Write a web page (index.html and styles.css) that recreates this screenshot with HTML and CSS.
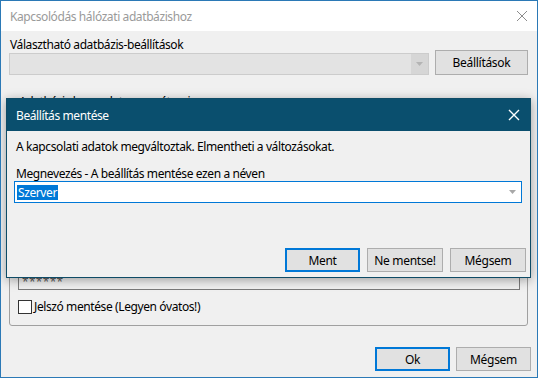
FILE: index.html
```html
<!DOCTYPE html>
<html lang="hu">
<head>
<meta charset="utf-8">
<title>Kapcsolódás hálózati adatbázishoz</title>
<link rel="stylesheet" href="styles.css">
</head>
<body>
<div class="window">
  <div class="titlebar">
    <span class="title">Kapcsolódás hálózati adatbázishoz</span>
    <svg class="close" width="12" height="12" viewBox="0 0 12 12"><path d="M1 1L11 11M11 1L1 11" stroke="#8c8c8c" stroke-width="1" fill="none"/></svg>
  </div>
  <div class="content">
    <div class="top-row">
      <div class="top-left">
        <div class="label">Választható adatbázis-beállítások</div>
        <div class="combo disabled">
          <span class="combo-text"></span>
          <span class="combo-arrow"><svg width="7" height="4" viewBox="0 0 7 4"><path d="M0 0H7L3.5 4Z" fill="#b4b4b4"/></svg></span>
        </div>
      </div>
      <button class="btn btn-settings">Beállítások</button>
    </div>
    <div class="group">
      <span class="legend">Adatbázis kapcsolat paraméterei</span>
      <div class="textbox"><span class="pw">******</span></div>
      <label class="check-row"><span class="checkbox"></span><span>Jelszó mentése (Legyen óvatos!)</span></label>
    </div>
    <div class="bottom-row">
      <button class="btn btn-default">Ok</button>
      <button class="btn">Mégsem</button>
    </div>
  </div>

  <div class="dialog">
    <div class="dlg-title">
      <span>Beállítás mentése</span>
      <svg class="dlg-close" width="12" height="12" viewBox="0 0 12 12"><path d="M1 1L11 11M11 1L1 11" stroke="#ffffff" stroke-width="1.4" fill="none"/></svg>
    </div>
    <div class="dlg-body">
      <div class="msg">A kapcsolati adatok megváltoztak. Elmentheti a változásokat.</div>
      <div class="label2">Megnevezés - A beállítás mentése ezen a néven</div>
      <div class="combo focused">
        <span class="combo-text"><span class="sel">Szerver</span></span>
        <span class="combo-arrow plain"><svg width="7" height="4" viewBox="0 0 7 4"><path d="M0 0H7L3.5 4Z" fill="#a8a8a8"/></svg></span>
      </div>
      <div class="dlg-buttons">
        <button class="btn btn-default w75">Ment</button>
        <button class="btn w76">Ne mentse!</button>
        <button class="btn w76">Mégsem</button>
      </div>
    </div>
  </div>
</div>
</body>
</html>
```

FILE: styles.css
```css
* { box-sizing: border-box; }
html, body { margin: 0; padding: 0; }
body {
  font-family: "Noto Sans", "Open Sans", sans-serif;
  font-size: 12px;
  letter-spacing: -0.4px;
  color: #000;
  background: #fff;
}
.window {
  position: relative;
  width: 538px;
  height: 378px;
  border: 1px solid #2b79b6;
  background: #f0f0f0;
  display: flex;
  flex-direction: column;
  overflow: hidden;
}
.titlebar {
  height: 30px;
  background: #fff;
  display: flex;
  align-items: center;
  justify-content: space-between;
  padding: 0 9px 0 9px;
  flex: none;
}
.title { color: #9a9a9a; }
.content {
  flex: 1;
  display: flex;
  flex-direction: column;
  padding: 6px 9px 6px 8px;
}
.top-row {
  display: flex;
  align-items: flex-end;
  gap: 6px;
  height: 38px;
}
.top-left { width: 420px; display: flex; flex-direction: column; }
.label { line-height: 15px; height: 15px; padding-left: 1px; margin-bottom: 1px; }
.combo {
  height: 22px;
  display: flex;
  align-items: stretch;
  border: 1px solid #ccc;
}
.combo.disabled { background: #e3e3e3; border-color: #cccccc; }
.combo-text { flex: 1; display: flex; align-items: center; padding-left: 2px; }
.combo-arrow {
  width: 17px;
  display: flex;
  align-items: center;
  justify-content: center;
  background: #d6d6d6;
}
.combo-arrow.plain { background: transparent; }
.combo.focused { background: #fff; border-color: #0078d7; }
.sel { background: #0078d7; color: #fff; line-height: 15px; padding: 0 1px; }

.btn {
  font-family: inherit;
  font-size: 12px;
  letter-spacing: -0.3px;
  height: 24px;
  background: #e1e1e1;
  border: 1px solid #adadad;
  color: #000;
  padding: 0;
  margin: 0;
}
.btn-default { border: 2px solid #0078d7; }
.btn-settings { width: 93px; height: 25px; }

.group {
  position: relative;
  margin-top: 27px;
  height: 224px;
  border: 1px solid #a0a0a0;
  border-radius: 3px;
  display: flex;
  flex-direction: column;
  justify-content: flex-end;
  padding: 0 7px 11px 8px;
}
.legend {
  position: absolute;
  top: -9px;
  left: 7px;
  padding: 0 2px;
  line-height: 15px;
  background: #f0f0f0;
}
.textbox {
  height: 22px;
  border: 1px solid #7a7a7a;
  background: #f0f0f0;
  padding-left: 3px;
  display: flex;
  align-items: flex-end;
}
.pw { color: #555; line-height: 15px; letter-spacing: 0.3px; }
.check-row {
  margin-top: 9px;
  display: flex;
  align-items: center;
  gap: 2px;
  line-height: 15px;
}
.checkbox {
  width: 14px;
  height: 14px;
  border: 1px solid #333;
  background: #fff;
  flex: none;
}
.bottom-row {
  margin-top: 21px;
  display: flex;
  justify-content: flex-end;
  gap: 6px;
  margin-right: -3px;
}
.bottom-row .btn { width: 75px; }

.dialog {
  position: absolute;
  left: 5px;
  top: 97px;
  width: 525px;
  height: 180px;
  background: #f0f0f0;
  border: 1px solid #0e4b66;
  box-shadow: 0 2px 10px rgba(0,0,0,0.35);
  display: flex;
  flex-direction: column;
}
.dlg-title {
  height: 32px;
  background: #0a4f6e;
  color: #fff;
  display: flex;
  align-items: center;
  justify-content: space-between;
  padding: 0 10px 0 9px;
  flex: none;
}
.dlg-body {
  flex: 1;
  display: flex;
  flex-direction: column;
  padding: 8px 8px 5px 7px;
}
.msg { line-height: 15px; padding-left: 2px; }
.label2 { margin-top: 12px; line-height: 15px; padding-left: 2px; }
.dlg-buttons {
  margin-top: auto;
  display: flex;
  justify-content: flex-end;
  gap: 7px;
  margin-right: -4px;
}
.w75 { width: 75px; }
.w76 { width: 76px; }
```
